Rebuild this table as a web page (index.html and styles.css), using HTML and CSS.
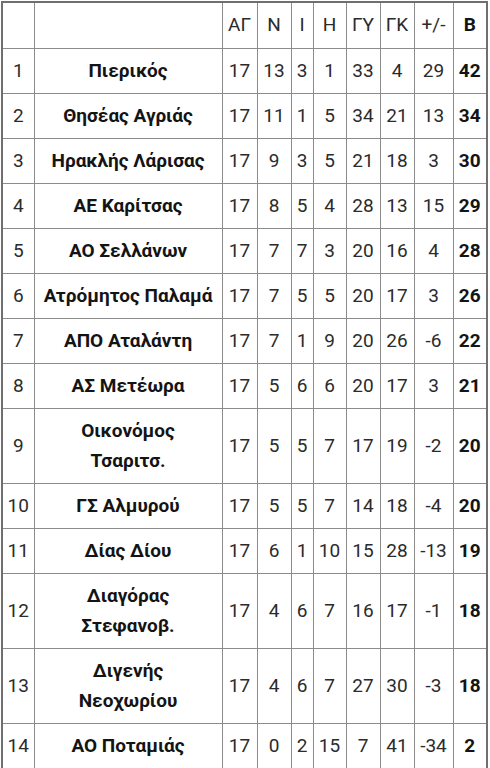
FILE: index.html
```html
<!DOCTYPE html>
<html lang="el">
<head>
<meta charset="utf-8">
<title>Βαθμολογία</title>
<link rel="stylesheet" href="styles.css">
</head>
<body>
<table class="standings">
  <colgroup>
    <col class="c-rank"><col class="c-team"><col class="c-ag"><col class="c-n"><col class="c-i"><col class="c-h"><col class="c-gy"><col class="c-gk"><col class="c-diff"><col class="c-pts">
  </colgroup>
  <thead>
    <tr><th></th><th></th><th>ΑΓ</th><th>Ν</th><th>Ι</th><th>Η</th><th>ΓΥ</th><th>ΓΚ</th><th>+/-</th><th class="pts">Β</th></tr>
  </thead>
  <tbody>
    <tr><td>1</td><td class="team">Πιερικός</td><td>17</td><td>13</td><td>3</td><td>1</td><td>33</td><td>4</td><td>29</td><td class="pts">42</td></tr>
    <tr><td>2</td><td class="team">Θησέας Αγριάς</td><td>17</td><td>11</td><td>1</td><td>5</td><td>34</td><td>21</td><td>13</td><td class="pts">34</td></tr>
    <tr><td>3</td><td class="team">Ηρακλής Λάρισας</td><td>17</td><td>9</td><td>3</td><td>5</td><td>21</td><td>18</td><td>3</td><td class="pts">30</td></tr>
    <tr><td>4</td><td class="team">ΑΕ Καρίτσας</td><td>17</td><td>8</td><td>5</td><td>4</td><td>28</td><td>13</td><td>15</td><td class="pts">29</td></tr>
    <tr><td>5</td><td class="team">ΑΟ Σελλάνων</td><td>17</td><td>7</td><td>7</td><td>3</td><td>20</td><td>16</td><td>4</td><td class="pts">28</td></tr>
    <tr><td>6</td><td class="team">Ατρόμητος Παλαμά</td><td>17</td><td>7</td><td>5</td><td>5</td><td>20</td><td>17</td><td>3</td><td class="pts">26</td></tr>
    <tr><td>7</td><td class="team">ΑΠΟ Αταλάντη</td><td>17</td><td>7</td><td>1</td><td>9</td><td>20</td><td>26</td><td>-6</td><td class="pts">22</td></tr>
    <tr><td>8</td><td class="team">ΑΣ Μετέωρα</td><td>17</td><td>5</td><td>6</td><td>6</td><td>20</td><td>17</td><td>3</td><td class="pts">21</td></tr>
    <tr><td>9</td><td class="team">Οικονόμος<br>Τσαριτσ.</td><td>17</td><td>5</td><td>5</td><td>7</td><td>17</td><td>19</td><td>-2</td><td class="pts">20</td></tr>
    <tr><td>10</td><td class="team">ΓΣ Αλμυρού</td><td>17</td><td>5</td><td>5</td><td>7</td><td>14</td><td>18</td><td>-4</td><td class="pts">20</td></tr>
    <tr><td>11</td><td class="team">Δίας Δίου</td><td>17</td><td>6</td><td>1</td><td>10</td><td>15</td><td>28</td><td>-13</td><td class="pts">19</td></tr>
    <tr><td>12</td><td class="team">Διαγόρας<br>Στεφανοβ.</td><td>17</td><td>4</td><td>6</td><td>7</td><td>16</td><td>17</td><td>-1</td><td class="pts">18</td></tr>
    <tr><td>13</td><td class="team">Διγενής<br>Νεοχωρίου</td><td>17</td><td>4</td><td>6</td><td>7</td><td>27</td><td>30</td><td>-3</td><td class="pts">18</td></tr>
    <tr><td>14</td><td class="team">ΑΟ Ποταμιάς</td><td>17</td><td>0</td><td>2</td><td>15</td><td>7</td><td>41</td><td>-34</td><td class="pts">2</td></tr>
  </tbody>
</table>
</body>
</html>
```

FILE: styles.css
```css
html, body {
  margin: 0;
  padding: 0;
  background: #ffffff;
}

body {
  padding: 1px 0 0 1px;
}

.standings {
  border-collapse: collapse;
  table-layout: fixed;
  width: 487px;
  font-family: Roboto, "Noto Sans", "DejaVu Sans", sans-serif;
  font-size: 19px;
  color: #2b2b2b;
  border: 2px solid #6f6f6f;
}

.c-rank { width: 32px; }
.c-team { width: 188px; }
.c-ag { width: 35px; }
.c-n { width: 34px; }
.c-i { width: 22px; }
.c-h { width: 33px; }
.c-gy { width: 34px; }
.c-gk { width: 34px; }
.c-diff { width: 39px; }
.c-pts { width: 34px; }

.standings th,
.standings td {
  border: 1px solid #8c8c8c;
  padding: 7px 0;
  line-height: 30px;
  text-align: center;
  vertical-align: middle;
  font-weight: 400;
  white-space: normal;
}

.standings th {
  padding: 7px 0 8px;
}

.standings .team {
  font-weight: 700;
  color: #141414;
  padding: 7px 6px;
}

.standings .pts {
  font-weight: 700;
  color: #141414;
}
```
